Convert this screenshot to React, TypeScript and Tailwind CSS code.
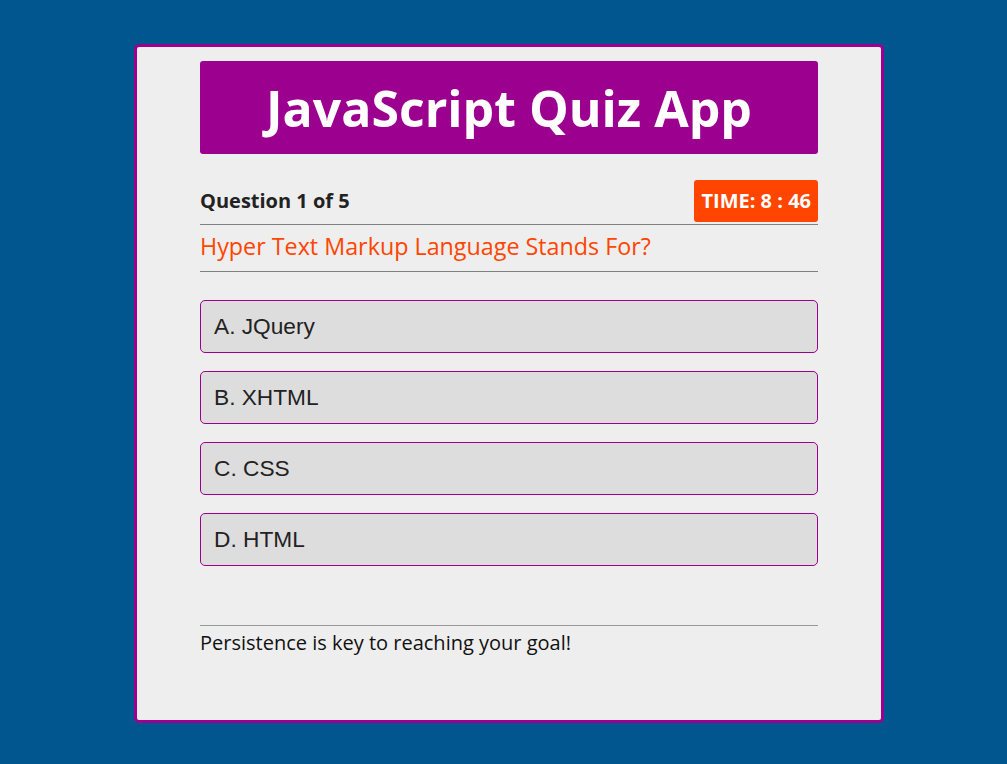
import React from "react";

const options = ["A. JQuery", "B. XHTML", "C. CSS", "D. HTML"];

export default function App() {
  return (
    <div className="min-h-[764px] w-full bg-[#01568f] pt-[44px] font-['Open_Sans',sans-serif]">
      <div className="ml-[134px] flex h-[679px] w-[750px] flex-col rounded-[5px] border-[3px] border-[#9b008f] bg-[#eeeeee] px-[63px] pt-[14px]">
        <div className="flex h-[93px] items-center justify-center rounded-[3px] bg-[#9c008f]">
          <h1 className="text-[50px] font-bold leading-none text-white">JavaScript Quiz App</h1>
        </div>
        <div className="mt-[26px] flex items-center justify-between border-b border-[#808080] pb-[2px]">
          <span className="text-[20px] font-bold text-[#222]">Question 1 of 5</span>
          <div className="flex h-[42px] items-center rounded-[3px] bg-[#ff4500] px-[7px] text-[20px] font-bold text-white">
            TIME: 8 : 46
          </div>
        </div>
        <div className="flex h-[47px] items-center border-b border-[#808080] pb-[4px] text-[23.3px] text-[#ff4500]">
          Hyper Text Markup Language Stands For?
        </div>
        <div className="mt-[28px] flex flex-col gap-[18px]">
          {options.map((o) => (
            <div
              key={o}
              className="flex h-[53px] items-center rounded-[5px] border border-[#9b008f] bg-[#dddddd] px-[13px] font-['Liberation_Sans',Arial,sans-serif] text-[22.7px] text-[#222]"
            >
              {o}
            </div>
          ))}
        </div>
        <div className="mt-[59px] border-t border-[#999] pt-[3px] text-[20px] leading-[28px] text-[#111]">
          Persistence is key to reaching your goal!
        </div>
      </div>
    </div>
  );
}
